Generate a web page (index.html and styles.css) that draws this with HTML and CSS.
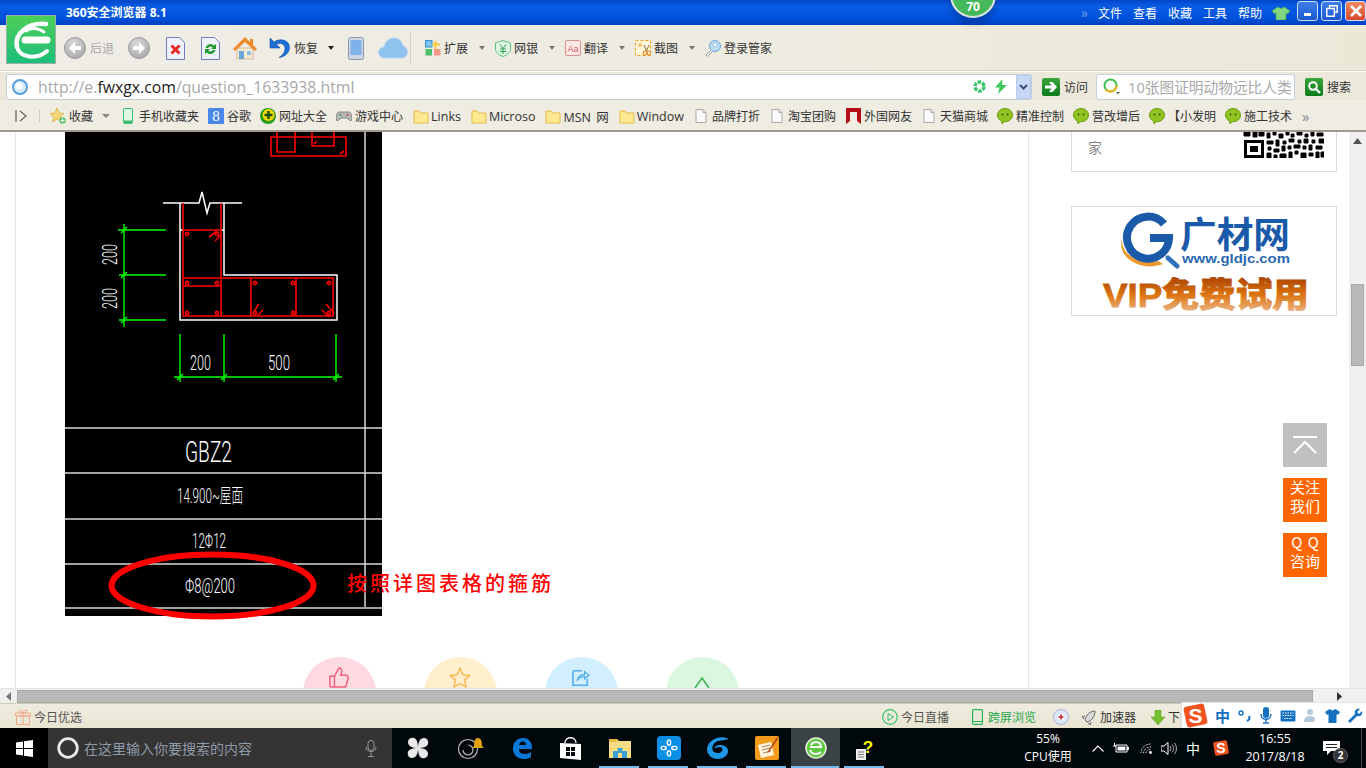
FILE: index.html
```html
<!DOCTYPE html>
<html lang="zh-CN">
<head>
    <meta charset="UTF-8">
    <meta name="viewport" content="width=device-width, initial-scale=1.0">
    <title>360安全浏览器 8.1</title>
    <link rel="stylesheet" href="styles.css">
</head>
<body>
    <svg class="defs" aria-hidden="true">
        <defs>
            <linearGradient id="logo-green" x1="0" y1="0" x2="0" y2="1">
                <stop offset="0" stop-color="#4ccf58"/>
                <stop offset="1" stop-color="#1cbf7c"/>
            </linearGradient>
            <linearGradient id="vip-fill" x1="0" y1="0" x2="0" y2="1">
                <stop offset="0" stop-color="#a84000"/>
                <stop offset="0.5" stop-color="#dc7410"/>
                <stop offset="1" stop-color="#eebc94"/>
            </linearGradient>
            <radialGradient id="grey-ball" cx="0.4" cy="0.3" r="0.8">
                <stop offset="0" stop-color="#d8d8d8"/>
                <stop offset="1" stop-color="#a6a6a6"/>
            </radialGradient>
            <linearGradient id="green-btn" x1="0" y1="0" x2="0" y2="1">
                <stop offset="0" stop-color="#3aa53a"/>
                <stop offset="1" stop-color="#0d7a1c"/>
            </linearGradient>
            <symbol id="i-folder" viewBox="0 0 16 16">
                <path d="M1 3h5l1.500 2H15v10H1z" fill="#fde98f" stroke="#e8b84a"/>
            </symbol>
            <symbol id="i-doc" viewBox="0 0 12 14">
                <path d="M1 .5h7l3 3v10H1z" fill="#fafafa" stroke="#a8a8a8"/>
                <path d="M8 .5v3h3" fill="none" stroke="#a8a8a8"/>
            </symbol>
            <symbol id="i-chat" viewBox="0 0 16 16">
                <path d="M8 .5c4.200 0 7.500 2.900 7.500 6.600S12.200 13.700 8 13.700h-.8L5 15.800l-.6-3C2 11.700.5 9.600.5 7.100.5 3.400 3.800.5 8 .5z" fill="#8fc31f" stroke="#6d9a12"/>
                <circle cx="5.500" cy="6.500" r="1" fill="#3c5a08"/>
                <circle cx="10.500" cy="6.500" r="1" fill="#3c5a08"/>
            </symbol>
        </defs>
    </svg>

    <div class="browser">
        <!-- title bar -->
        <div class="titlebar">
            <span class="app-title">360安全浏览器 8.1</span>
            <div class="score">70</div>
            <div class="title-menu">
                <span class="chevrons">»</span>
                <span>文件</span><span>查看</span><span>收藏</span><span>工具</span><span>帮助</span>
                <svg class="shirt" width="18" height="14" viewBox="0 0 18 14"><path d="M5.500 1 9 2.500 12.500 1 18 5l-2.500 3-1.500-1v7H4V7L2.500 8 0 5z" fill="#7fd67f" stroke="#3f9f4f" stroke-width=".6"/></svg>
            </div>
            <div class="win-buttons">
                <div class="win-btn"><svg width="10" height="10" viewBox="0 0 10 10"><rect x="1" y="7" width="7" height="3" fill="#fff"/></svg></div>
                <div class="win-btn"><svg width="12" height="12" viewBox="0 0 12 12"><path d="M3.500 3V.8h7.700v6.400H8.500M.8 3.500h7.500v7.700H.8z" fill="none" stroke="#fff" stroke-width="1.400"/></svg></div>
                <div class="win-btn win-close"><svg width="12" height="12" viewBox="0 0 12 12"><path d="M1 1l10 10M11 1 1 11" stroke="#fff" stroke-width="2.600"/></svg></div>
            </div>
        </div>

        <!-- logo sits across title bar and toolbar -->
        <div class="app-logo">
            <svg width="48" height="47" viewBox="0 0 48 47">
                <rect width="48" height="47" fill="url(#logo-green)"/>
                <path d="M18 24H40" fill="none" stroke="#fff" stroke-width="7" stroke-linecap="round"/>
                <path d="M10 31C7 17 22 6 39 8" fill="none" stroke="#fff" stroke-width="4.500" stroke-linecap="round"/>
                <path d="M10 31C13 42 30 44 40 35" fill="none" stroke="#fff" stroke-width="4" stroke-linecap="round"/>
                <path d="M19 15C24 11 32 12 37 16" fill="none" stroke="#fff" stroke-width="3" stroke-linecap="round"/>
            </svg>
        </div>

        <!-- toolbar -->
        <div class="toolbar">
            <div class="tool tool-back">
                <svg width="22" height="22" viewBox="0 0 22 22"><circle cx="11" cy="11" r="10.500" fill="url(#grey-ball)" stroke="#999"/><path d="M11 5 5 11l6 6v-4h6V9h-6z" fill="#fff"/></svg>
                <span class="muted">后退</span>
            </div>
            <div class="tool tool-forward">
                <svg width="22" height="22" viewBox="0 0 22 22"><circle cx="11" cy="11" r="10.500" fill="url(#grey-ball)" stroke="#999"/><path d="M11 5l6 6-6 6v-4H5V9h6z" fill="#fff"/></svg>
            </div>
            <div class="tool tool-stop">
                <svg width="19" height="23" viewBox="0 0 19 23"><path d="M.5.500h13l5 5v17H.5z" fill="#eef0fb" stroke="#6f7fc0"/><path d="M5.500 8.500l8 8M13.500 8.500l-8 8" stroke="#e8261c" stroke-width="2.800"/></svg>
            </div>
            <div class="tool tool-refresh">
                <svg width="19" height="23" viewBox="0 0 19 23"><path d="M.5.500h13l5 5v17H.5z" fill="#eef0fb" stroke="#6f7fc0"/><path d="M4.500 11a5 5 0 0 1 8.500-2.500L15 7v5h-5l1.700-1.700A3 3 0 0 0 7 11zM14.500 13a5 5 0 0 1-8.500 2.500L4 17v-5h5l-1.700 1.700A3 3 0 0 0 12 13z" fill="#1e9a28"/></svg>
            </div>
            <div class="tool tool-home">
                <svg width="24" height="24" viewBox="0 0 24 24"><path d="M4 12h16v11H4z" fill="#f5e9cf" stroke="#b8a27a" stroke-width=".6"/><path d="M12 1 0 13l2 2L12 6l10 9 2-2-4-4V3h-3v3z" fill="#ef8a2a"/><rect x="6" y="15" width="5" height="8" fill="#6aa6dc"/><rect x="14" y="15" width="4" height="4" fill="#8ec0ea"/></svg>
            </div>
            <div class="tool tool-undo">
                <svg width="22" height="22" viewBox="0 0 22 22"><path d="M2 1v10h10L8.500 7.500C12 5 17 7 17 11.500c0 4-3 7-6 9 6-.5 10.500-5 10.500-10C21.500 3 12 .5 6 5z" fill="#1f6fd6" stroke="#104f9c" stroke-width=".6"/></svg>
                <span>恢复</span>
                <i class="caret caret-dark"></i>
            </div>
            <div class="tool tool-phone">
                <svg width="16" height="23" viewBox="0 0 16 23"><rect x=".5" y=".5" width="15" height="22" rx="2" fill="#cfd6e2" stroke="#8a97ad"/><rect x="2.500" y="3" width="11" height="15" fill="#7fb2ea"/></svg>
            </div>
            <div class="tool tool-cloud">
                <svg width="30" height="22" viewBox="0 0 30 22"><path d="M7 21c-4 0-6.500-2.500-6.500-5.500S3 10 6 10c1-5 5-9 10-9s8 3.500 9 8c3 .5 4.500 3 4.500 6s-2.500 6-5.500 6z" fill="#8fc2ee" stroke="#b5d5f2"/></svg>
            </div>
            <div class="tool-sep"></div>
            <div class="tool tool-menu tool-ext">
                <svg width="16" height="16" viewBox="0 0 16 16"><rect x=".5" y=".5" width="6.500" height="6.500" fill="#7cc4f0" stroke="#3d8fd0"/><path d="M11.500 0v3.500H15v2h-3.500V9h-2V5.500H6" fill="#f6c83c"/><rect x=".5" y="9" width="6.500" height="6.500" fill="#4cc06a"/><rect x="9" y="9" width="6.500" height="6.500" fill="#f49a8a"/></svg>
                <span>扩展</span>
                <i class="caret"></i>
            </div>
            <div class="tool tool-menu">
                <svg width="16" height="17" viewBox="0 0 16 17"><path d="M8 .5 15.500 3v6c0 3.500-3 6-7.500 7.500C3.500 15 .5 12.500.5 9V3z" fill="#dff6e4" stroke="#5cbf7a"/><path d="M5 4.500l3 4 3-4M5 9h6M5 11.500h6M8 8.500V14" fill="none" stroke="#2fa558"/></svg>
                <span>网银</span>
                <i class="caret"></i>
            </div>
            <div class="tool tool-menu">
                <svg width="16" height="16" viewBox="0 0 16 16"><rect x=".5" y=".5" width="15" height="15" rx="1.500" fill="#fbe9e6" stroke="#dc8f8f"/><text class="icon-label" x="8" y="11.500">Aa</text></svg>
                <span>翻译</span>
                <i class="caret"></i>
            </div>
            <div class="tool tool-menu">
                <svg width="16" height="16" viewBox="0 0 16 16"><rect x=".5" y=".5" width="15" height="15" fill="#fff6dc" stroke="#f0a020" stroke-dasharray="3 2"/><circle cx="5" cy="5" r="2" fill="#f5c066"/><circle cx="10" cy="13" r="2" fill="none" stroke="#e07c10"/><circle cx="14" cy="13" r="2" fill="none" stroke="#e07c10"/><path d="M9 5l2.500 6 2.500-6" fill="none" stroke="#8a6a30"/></svg>
                <span>截图</span>
                <i class="caret"></i>
            </div>
            <div class="tool tool-login">
                <svg width="16" height="17" viewBox="0 0 16 17"><circle cx="10" cy="6" r="5.500" fill="#bcdcf6" stroke="#6fa8d8"/><circle cx="10" cy="5" r="2" fill="#fff" stroke="#6fa8d8" stroke-width=".6"/><path d="M6 10 1 15l1.500 1.500 5-5" fill="#f2f2f2" stroke="#9a9a9a"/></svg>
                <span>登录管家</span>
            </div>
        </div>

        <!-- address bar -->
        <div class="addressbar">
            <div class="url-box">
                <svg width="16" height="16" viewBox="0 0 16 16"><circle cx="8" cy="8" r="7" fill="#d6ecfb" stroke="#5a9fdc" stroke-width="2"/><circle cx="7" cy="7" r="3.500" fill="#fff"/></svg>
                <div class="url-text">http://e.<b>fwxgx.com</b>/question_1633938.html</div>
                <svg class="spin" width="13" height="13" viewBox="0 0 13 13"><circle cx="6.500" cy="6.500" r="4.500" fill="none" stroke="#37c46a" stroke-width="3.400" stroke-dasharray="3.500 1.200"/></svg>
                <svg class="bolt" width="12" height="15" viewBox="0 0 12 15"><path d="M7.500 0 0 8.500h4.500L3 15l9-9H7z" fill="#3cc85a"/></svg>
                <div class="url-drop"><svg width="9" height="6" viewBox="0 0 9 6"><path d="M1 1l3.500 3.500L8 1" fill="none" stroke="#36507e" stroke-width="2"/></svg></div>
            </div>
            <div class="go-btn">
                <svg width="18" height="18" viewBox="0 0 18 18"><rect width="18" height="18" rx="2" fill="url(#green-btn)"/><path d="M3 7.500h6.500L7 4h3.500L15 9l-4.500 5H7l2.500-3.500H3z" fill="#fff"/></svg>
                <span>访问</span>
            </div>
            <div class="search-box">
                <svg width="17" height="17" viewBox="0 0 17 17"><circle cx="7.500" cy="7.500" r="6" fill="none" stroke="#3ec04e" stroke-width="2"/><path d="M13.500 7.500A6 6 0 0 1 3 11.500" fill="none" stroke="#f4b21c" stroke-width="2"/><path d="M13 14h4l-2 2.500z" fill="#666"/></svg>
                <div class="search-text">10张图证明动物远比人类</div>
            </div>
            <div class="go-btn search-btn">
                <svg width="18" height="18" viewBox="0 0 18 18"><rect width="18" height="18" rx="2" fill="url(#green-btn)"/><circle cx="8" cy="8" r="3.800" fill="none" stroke="#fff" stroke-width="2"/><path d="M11 11l4 4" stroke="#fff" stroke-width="2.400"/></svg>
                <span>搜索</span>
            </div>
        </div>

        <!-- favourites bar -->
        <div class="favbar">
            <svg class="fav-toggle" width="12" height="12" viewBox="0 0 12 12"><path d="M1 0v12M5 1l6 5-6 5" fill="none" stroke="#666" stroke-width="1.300"/></svg>
            <div class="fav-sep"></div>
            <div class="fav fav-main">
                <svg width="16" height="16" viewBox="0 0 16 16"><path d="M7 0l2 5 5 .5-3.800 3.300 1.200 5L7 11l-4.400 2.800 1.200-5L0 5.500 5 5z" fill="#f8d878" stroke="#d8a830" stroke-width=".7"/><circle cx="12.500" cy="12.500" r="3.200" fill="#5ac26a"/><path d="M12.500 10.500v4M10.500 12.500h4" stroke="#fff"/></svg>
                <span>收藏</span>
                <i class="caret caret-wide"></i>
            </div>
            <div class="fav fav-phone">
                <svg width="10" height="16" viewBox="0 0 10 16"><rect x=".5" y=".5" width="9" height="15" rx="1.500" fill="#dff5e6" stroke="#3fbe72"/><rect x="1" y="12.500" width="8" height="3" fill="#3fbe72"/></svg>
                <span>手机收藏夹</span>
            </div>
            <div class="fav">
                <svg width="16" height="16" viewBox="0 0 16 16"><rect width="16" height="16" rx="1" fill="#4a88e8"/><text class="icon-g" x="8" y="13">8</text></svg>
                <span>谷歌</span>
            </div>
            <div class="fav">
                <svg width="16" height="16" viewBox="0 0 16 16"><circle cx="8" cy="8" r="8" fill="#2a9a20"/><circle cx="8.500" cy="7" r="6" fill="#f5d800"/><path d="M8.500 3v8M4.500 7h8" stroke="#14500f" stroke-width="2.400"/></svg>
                <span>网址大全</span>
            </div>
            <div class="fav">
                <svg width="16" height="16" viewBox="0 0 16 16"><path d="M3 4h10c2 0 3 4 3 7 0 2-2 2-3 1l-2-2H5l-2 2c-1 1-3 1-3-1 0-3 1-7 3-7z" fill="#b8b8b8" stroke="#666" stroke-width=".7"/><circle cx="4.500" cy="7" r="1" fill="#3a9a3a"/><circle cx="11.500" cy="7" r="1" fill="#c83a3a"/></svg>
                <span>游戏中心</span>
            </div>
            <div class="fav fav-folder"><svg width="16" height="16"><use href="#i-folder"/></svg><span>Links</span></div>
            <div class="fav fav-folder"><svg width="16" height="16"><use href="#i-folder"/></svg><span>Microso</span></div>
            <div class="fav fav-folder"><svg width="16" height="16"><use href="#i-folder"/></svg><span>MSN 网</span></div>
            <div class="fav fav-folder"><svg width="16" height="16"><use href="#i-folder"/></svg><span>Window</span></div>
            <div class="fav fav-doc"><svg width="12" height="14"><use href="#i-doc"/></svg><span>品牌打折</span></div>
            <div class="fav fav-doc"><svg width="12" height="14"><use href="#i-doc"/></svg><span>淘宝团购</span></div>
            <div class="fav fav-red">
                <svg width="15" height="16" viewBox="0 0 15 16"><path d="M0 0h15v16l-4-3V4H4v9l-4 3z" fill="#b80d12"/></svg>
                <span>外国网友</span>
            </div>
            <div class="fav fav-doc"><svg width="12" height="14"><use href="#i-doc"/></svg><span>天猫商城</span></div>
            <div class="fav"><svg width="16" height="16"><use href="#i-chat"/></svg><span>精准控制</span></div>
            <div class="fav"><svg width="16" height="16"><use href="#i-chat"/></svg><span>营改增后</span></div>
            <div class="fav"><svg width="16" height="16"><use href="#i-chat"/></svg><span>【小发明</span></div>
            <div class="fav"><svg width="16" height="16"><use href="#i-chat"/></svg><span>施工技术</span></div>
            <span class="fav-more">»</span>
        </div>

        <!-- page area -->
        <div class="viewport">
            <div class="page">
                <main class="article">
                    <figure class="drawing">
                        <svg class="cad" width="317" height="484" viewBox="65 132 317 484">
                            <rect x="65" y="132" width="317" height="484" fill="#000"/>
                            <!-- detail above, cut by the scroll -->
                            <g class="cad-red">
                                <path d="M271 137h75v19h-75zM277 132v20h18v-20M312 132v14h22v-14M314 144l3-3M340 154l4-3"/>
                            </g>
                            <!-- wall outline -->
                            <path class="cad-white" d="M163 203h36l3-11 5 21 3-10h32"/>
                            <path class="cad-white" d="M180 203v117h157v-45h-113v-72"/>
                            <path class="cad-white" d="M180 230h3M221 230h3"/>
                            <!-- rebar -->
                            <g class="cad-red">
                                <path d="M183 203v113h150v-38H183M221 203v113M183 230h38M183 286h38M251 278v38M296 278v38"/>
                                <path d="M209 237l8-6M215 241l6-6M253 313l6-9M258 315l5-5M322 310l7 7M326 304l7 8"/>
                                <circle cx="187" cy="234" r="1.600"/><circle cx="217" cy="234" r="1.600"/>
                                <circle cx="187" cy="283" r="1.600"/><circle cx="217" cy="283" r="1.600"/>
                                <circle cx="187" cy="313" r="1.600"/><circle cx="217" cy="313" r="1.600"/>
                                <circle cx="255" cy="283" r="1.600"/><circle cx="293" cy="283" r="1.600"/>
                                <circle cx="255" cy="313" r="1.600"/><circle cx="293" cy="313" r="1.600"/>
                                <circle cx="329" cy="283" r="1.600"/><circle cx="329" cy="313" r="1.600"/>
                            </g>
                            <!-- dimensions -->
                            <g class="cad-green">
                                <path d="M124 224v103M118 230h48M119 275h47M119 320h47"/>
                                <path d="M180 334v48M224 334v48M336 334v48M174 377h168"/>
                                <path d="M121 233l6-6M121 278l6-6M121 323l6-6M177 380l6-6M221 380l6-6M333 380l6-6"/>
                            </g>
                            <text class="cad-text" transform="translate(117 265) rotate(-90)" textLength="21" lengthAdjust="spacingAndGlyphs">200</text>
                            <text class="cad-text" transform="translate(117 309) rotate(-90)" textLength="21" lengthAdjust="spacingAndGlyphs">200</text>
                            <text class="cad-text" x="190" y="370" textLength="21" lengthAdjust="spacingAndGlyphs">200</text>
                            <text class="cad-text" x="268" y="370" textLength="22" lengthAdjust="spacingAndGlyphs">500</text>
                            <!-- table -->
                            <path class="cad-rule" d="M365 132v475M65 428h317M65 473h317M65 519h317M65 564h317M65 608h317"/>
                            <text class="cad-title" x="185" y="462" textLength="47" lengthAdjust="spacingAndGlyphs">GBZ2</text>
                            <text class="cad-cell" x="177" y="503" textLength="66" lengthAdjust="spacingAndGlyphs">14.900~屋面</text>
                            <text class="cad-cell" x="192" y="548" textLength="34" lengthAdjust="spacingAndGlyphs">12Φ12</text>
                            <text class="cad-cell" x="185" y="593" textLength="50" lengthAdjust="spacingAndGlyphs">Φ8@200</text>
                            <ellipse class="cad-ring" cx="212.500" cy="585.500" rx="101" ry="31"/>
                        </svg>
                        <figcaption class="note">按照详图表格的箍筋</figcaption>
                    </figure>
                    <div class="reactions">
                        <div class="reaction r-like">
                            <svg width="20" height="22" viewBox="0 0 22 24"><path d="M1 10h5v12H3a2 2 0 0 1-2-2zM6 10l5-9c2 0 3 2 3 4l-1 4h6c2 0 2 2 2 3l-2 8c0 1-1 2-3 2H6" fill="none" stroke="#f0607c" stroke-width="1.600"/></svg>
                        </div>
                        <div class="reaction r-star">
                            <svg width="22" height="22" viewBox="0 0 24 24"><path d="M12 1.500l3.200 7 7.300.8-5.500 5 1.500 7.500-6.500-3.800-6.500 3.800L7 14.300l-5.500-5 7.300-.8z" fill="none" stroke="#f6b84c" stroke-width="1.500"/></svg>
                        </div>
                        <div class="reaction r-share">
                            <svg width="18" height="18" viewBox="0 0 20 20"><path d="M11 2H3a2 2 0 0 0-2 2v14h16v-7" fill="none" stroke="#56b0ea" stroke-width="1.800"/><path d="M6 12c1-4 4-6 8-6V3l5 4-5 4V8c-3 0-5 1-8 4z" fill="none" stroke="#56b0ea" stroke-width="1.500"/></svg>
                        </div>
                        <div class="reaction r-up">
                            <svg width="16" height="12" viewBox="0 0 16 12"><path d="M1 11 8 1l7 10" fill="none" stroke="#3fb45a" stroke-width="1.600"/></svg>
                        </div>
                    </div>
                </main>
                <aside class="sidebar">
                    <div class="card card-qr">
                        <span class="qr-text">家</span>
                        <svg class="qr" width="81" height="26" viewBox="0 0 81 26">
                            <path d="M1 8h20v18H1zM4 11v12h14V11zM7 14h8v6H7z" fill="#000" fill-rule="evenodd"/>
                            <path class="qr-noise" d="M1 0h6v4H1zM10 0h4v5h-4zM16 0h5v4h-5zM24 1h3v5h-3zM30 0h3v3h-3zM36 2h4v4h-4zM43 0h3v3h-3zM48 2h3v3h-3zM54 0h5v3h-5zM62 2h3v3h-3zM68 0h3v4h-3zM74 1h6v3h-6zM24 9h6v3h-6zM33 8h3v6h-3zM40 9h3v3h-3zM46 7h5v3h-5zM55 8h3v3h-3zM61 7h4v4h-4zM69 8h3v3h-3zM76 7h5v4h-5zM25 15h3v3h-3zM31 17h5v3h-5zM39 14h3v5h-3zM45 14h3v3h-3zM51 13h6v3h-6zM60 14h3v3h-3zM66 13h3v5h-3zM73 14h6v3h-6zM24 21h4v5h-4zM31 23h3v3h-3zM37 22h6v4h-6zM46 20h3v6h-3zM52 19h3v3h-3zM58 21h5v5h-5zM66 21h4v3h-4zM73 20h3v6h-3zM78 20h3v5h-3z"/>
                        </svg>
                    </div>
                    <div class="card card-ad">
                        <svg width="264" height="108" viewBox="0 0 264 108">
                            <path d="M50 30C48 48 68 58 86 54l5 3C70 65 44 52 50 30z" fill="#ea9a2e"/>
                            <path d="M92 17A21 21 0 1 0 97 31H78" fill="none" stroke="#1a5aa8" stroke-width="8"/>
                            <path d="M96 51l9 8" stroke="#2f6fb8" stroke-width="5" stroke-linecap="round"/>
                            <text class="ad-name" x="108" y="41" textLength="110" lengthAdjust="spacingAndGlyphs">广材网</text>
                            <text class="ad-url" x="110" y="56" textLength="108" lengthAdjust="spacingAndGlyphs">www.gldjc.com</text>
                            <text class="ad-vip" x="31" y="100" textLength="206" lengthAdjust="spacingAndGlyphs">VIP免费试用</text>
                        </svg>
                    </div>
                </aside>
            </div>
            <div class="vscroll">
                <svg class="arrow-up" width="9" height="6" viewBox="0 0 9 6"><path d="M4.500 0 9 6H0z" fill="#555"/></svg>
                <div class="vthumb"></div>
            </div>
            <!-- floating side buttons -->
            <div class="float-btns">
                <div class="float-btn float-top">
                    <svg width="24" height="18" viewBox="0 0 24 18"><path d="M0 1h24" stroke="#fff" stroke-width="2"/><path d="M1 17 12 6l11 11" fill="none" stroke="#fff" stroke-width="2"/></svg>
                </div>
                <div class="float-btn"><span class="float-label">关注<br>我们</span></div>
                <div class="float-btn"><span class="float-label">Q Q<br>咨询</span></div>
            </div>
        </div>

        <!-- horizontal scrollbar -->
        <div class="hscroll">
            <svg class="arrow-left" width="5" height="9" viewBox="0 0 5 9"><path d="M5 0v9L0 4.500z" fill="#777"/></svg>
            <div class="hthumb"></div>
            <svg class="arrow-right" width="5" height="9" viewBox="0 0 5 9"><path d="M0 0v9l5-4.500z" fill="#333"/></svg>
        </div>

        <!-- status bar -->
        <div class="statusbar">
            <div class="status-item status-left">
                <svg width="16" height="16" viewBox="0 0 16 16"><path d="M1.500 7h13v8.500h-13zM.5 4h15v3H.5zM8 4v11.500M8 4C5 4 4 3 4 1.500 6 .5 8 2 8 4c0-2 2-3.500 4-2.500C12 3 11 4 8 4z" fill="none" stroke="#f4a98c"/></svg>
                <span>今日优选</span>
            </div>
            <div class="status-right">
                <div class="status-item">
                    <svg width="16" height="16" viewBox="0 0 16 16"><circle cx="8" cy="8" r="7.300" fill="none" stroke="#38bf6a" stroke-width="1.200"/><path d="M6 4.500 11.500 8 6 11.500z" fill="none" stroke="#38bf6a"/></svg>
                    <span>今日直播</span>
                </div>
                <div class="status-item status-cross">
                    <svg width="11" height="16" viewBox="0 0 11 16"><rect x=".6" y=".6" width="9.800" height="14.800" rx="1" fill="none" stroke="#28b85a" stroke-width="1.200"/><path d="M1 12.500h9" stroke="#28b85a"/></svg>
                    <span>跨屏浏览</span>
                </div>
                <svg class="status-med" width="16" height="16" viewBox="0 0 16 16"><circle cx="8" cy="8" r="7.500" fill="#dce6f6" stroke="#a8b8d8"/><circle cx="8" cy="8" r="3.500" fill="#fff"/><path d="M8 5.500v5M5.500 8h5" stroke="#c8282c" stroke-width="1.600"/></svg>
                <div class="status-item status-speed">
                    <svg width="14" height="15" viewBox="0 0 14 15"><path d="M13 1C8 1 4 5 3 10l2 2c5-1 8-6 8-11zM3 6 0 7l2 2M9 12l-1 3-2-2" fill="#d8d8d8" stroke="#666"/></svg>
                    <span>加速器</span>
                </div>
                <div class="status-item status-down">
                    <svg width="14" height="15" viewBox="0 0 14 15"><path d="M4 0h6v7h4l-7 8-7-8h4z" fill="#76c030" stroke="#5aa020" stroke-width=".5"/></svg>
                    <span>下载</span>
                </div>
            </div>
            <!-- input method bar -->
            <div class="ime">
                <svg class="ime-logo" width="25" height="25" viewBox="0 0 25 25"><rect x="2" y="2" width="21" height="21" rx="3" fill="#ef5322" transform="rotate(-12 12.500 12.500)"/><text class="ime-s" x="12.500" y="20">S</text></svg>
                <span class="ime-zh">中</span>
                <svg width="14" height="12" viewBox="0 0 14 12"><circle cx="3" cy="3" r="2" fill="none" stroke="#1470c0" stroke-width="1.400"/><path d="M11 6c1 2 0 4-2 5" fill="none" stroke="#1470c0" stroke-width="2"/></svg>
                <svg width="12" height="17" viewBox="0 0 12 17"><rect x="3" y="0" width="6" height="11" rx="3" fill="#1470c0"/><path d="M1 7c0 7 10 7 10 0M6 12v3M3 16h6" fill="none" stroke="#1470c0" stroke-width="1.400"/></svg>
                <svg width="16" height="12" viewBox="0 0 16 12"><rect x=".6" y=".6" width="14.800" height="10.800" rx="1" fill="#1470c0"/><path d="M2.500 3h11M2.500 5.500h11M4 8.500h8" stroke="#fff" stroke-dasharray="1.500 1"/></svg>
                <svg width="15" height="15" viewBox="0 0 15 15"><circle cx="6" cy="4" r="3" fill="#b4c8da"/><path d="M0 14c0-5 3-6 6-6s4 1 5 2l-1 4z" fill="#b4c8da"/></svg>
                <svg class="ime-shirt" width="15" height="14" viewBox="0 0 15 14"><path d="M4.500 0 7.500 1.500 10.500 0 15 3l-2 3-1.500-1v9h-8V5L2 6 0 3z" fill="#1470c0"/></svg>
                <svg width="15" height="15" viewBox="0 0 15 15"><path d="M14 3l-3 3-2-2 3-3c-3-1-6 1-5 5L0 13l2 2 7-7c4 1 6-2 5-5z" fill="#1470c0"/></svg>
            </div>
        </div>

        <!-- windows taskbar -->
        <div class="taskbar">
            <div class="start">
                <svg width="17" height="17" viewBox="0 0 17 17"><path d="M0 2.500 7 1.500v6.500H0zM8 1.300 17 0v8H8zM0 9h7v6.500l-7-1zM8 9h9v8l-9-1.300z" fill="#fff"/></svg>
            </div>
            <div class="cortana">
                <svg width="22" height="22" viewBox="0 0 22 22"><circle cx="11" cy="11" r="9.300" fill="none" stroke="#e8e8e8" stroke-width="2.800"/></svg>
                <span class="cortana-text">在这里输入你要搜索的内容</span>
                <svg class="mic" width="12" height="17" viewBox="0 0 12 17"><rect x="3" y=".5" width="6" height="10" rx="3" fill="none" stroke="#999"/><path d="M1 7c0 6 10 6 10 0M6 12.500V16M3 16.500h6" fill="none" stroke="#999"/></svg>
            </div>
            <div class="tile tile-first">
                <svg width="22" height="22" viewBox="0 0 22 22"><path d="M11 11C5 11 1 9 1 5c0-3 3-5 6-4 3 1 4 5 4 10zM11 11c0-6 2-10 6-10 3 0 5 3 4 6-1 3-5 4-10 4zM11 11c6 0 10 2 10 6 0 3-3 5-6 4-3-1-4-5-4-10zM11 11c0 6-2 10-6 10-3 0-5-3-4-6 1-3 5-4 10-4z" fill="#e8e8e8"/></svg>
            </div>
            <div class="tile tile-second">
                <svg width="28" height="24" viewBox="0 0 28 24"><circle cx="11" cy="13" r="9.500" fill="none" stroke="#bbb" stroke-width="1.200"/><path d="M6 14a5 5 0 1 0 5-5" fill="none" stroke="#bbb" stroke-width="1.200"/><path d="M17 10c0-5 1-8 4-8s4 3 4 8l2 2H15z" fill="#e0a010"/></svg>
            </div>
            <div class="tile">
                <svg width="20" height="21" viewBox="0 0 20 21"><path d="M1 11C1 4 5 0 11 0c6 0 9 4 9 11H7c0 3 2 5 6 5 2 0 4-.5 6-2v5c-2 1.500-4 2-7 2-6 0-11-4-11-10zM7 7h7c0-2-1-3.500-3.500-3.500C9 3.500 7.500 5 7 7z" fill="#0a78d7"/></svg>
            </div>
            <div class="tile">
                <svg width="21" height="23" viewBox="0 0 21 23"><path d="M5 6c0-7 11-7 11 0" fill="none" stroke="#fff" stroke-width="1.300"/><path d="M0 6l21 1v16L0 21z" fill="#fff"/><path d="M6 10h4v4H6zM11 10h4v4h-4zM6 15h4v4H6zM11 15h4v4h-4z" fill="#00080c"/></svg>
            </div>
            <div class="tile tile-open">
                <svg width="22" height="20" viewBox="0 0 22 20"><path d="M0 1h8l2 2h12v17H0z" fill="#f8dd85"/><rect y="1" width="8" height="3" fill="#e8b93c"/><path d="M4 20v-7h5l-1-3h6l-1 3h5v7z" fill="#3a9fd8"/><rect x="9" y="15" width="4" height="5" fill="#f8dd85"/></svg>
            </div>
            <div class="tile tile-open">
                <svg width="24" height="24" viewBox="0 0 24 24"><rect width="24" height="24" rx="4" fill="#0a8fe8"/><path d="M12 4c2 0 2 3 1 5h-2c-1-2-1-5 1-5zM4 12c0-2 3-2 5-1v2c-2 1-5 1-5-1zM20 12c0 2-3 2-5 1v-2c2-1 5-1 5 1zM12 20c-2 0-2-3-1-5h2c1 2 1 5-1 5z" fill="none" stroke="#fff" stroke-width="1.400"/></svg>
            </div>
            <div class="tile tile-open">
                <svg width="24" height="24" viewBox="0 0 24 24"><path d="M23 3C13-2 2 4 1 13c0 6 5 10 11 10s10-4 10-8-4-6-8-6c-3 0-5 1-6 3l6-1c2 0 3 2 2 4s-5 3-8 1C5 13 6 7 12 5c4-1 8-1 11-2z" fill="#1e96e6"/></svg>
            </div>
            <div class="tile tile-open">
                <svg width="24" height="24" viewBox="0 0 24 24"><rect width="24" height="24" rx="2" fill="#f29b1c"/><path d="M3 9l13-3 3 13-13 3z" fill="#fff5dc"/><path d="M7 11l8-2M7 14l8-2M8 17l8-2" stroke="#a08060"/><path d="M22 1 13 15l-1 2 2-1L23 3z" fill="#b8461c"/></svg>
            </div>
            <div class="tile tile-open tile-active">
                <svg width="22" height="22" viewBox="0 0 22 22"><circle cx="11" cy="11" r="10" fill="#5cc83c" stroke="#e8f4e0" stroke-width="1.500"/><path d="M5 10h12M5 13c1 3 3 4 6 4 2 0 4-1 5-2M6 8c1-2 3-3 5-3 3 0 5 2 5 5" fill="none" stroke="#fff" stroke-width="2"/></svg>
            </div>
            <div class="tile tile-open">
                <svg width="17" height="24" viewBox="0 -5 17 24"><path d="M0 8h10v11H0z" fill="#eee"/><path d="M2 11h6M2 13.500h6M2 16h6" stroke="#777"/><text class="tile-q" x="12" y="12">?</text></svg>
            </div>
            <div class="tray">
                <div class="cpu"><span>55%</span><span>CPU使用</span></div>
                <svg class="tray-up" width="12" height="7" viewBox="0 0 12 7"><path d="M.5 6.500 6 1l5.500 5.500" fill="none" stroke="#fff" stroke-width="1.100"/></svg>
                <svg class="tray-bat" width="16" height="10" viewBox="0 0 16 10"><path d="M0 3h3M1.500 0v3M3 2h11v7H3z" fill="none" stroke="#fff"/><rect x="4.500" y="3.500" width="8" height="4" fill="#fff"/><rect x="14" y="4" width="2" height="3" fill="#fff"/></svg>
                <svg class="tray-wifi" width="12" height="11" viewBox="0 0 12 11"><path d="M1 10C1 5 5 1 11 1M3.500 10c0-3 3-6 7.500-6M6 10c0-2 2-3.500 5-3.500" fill="none" stroke="#ddd" stroke-dasharray="1 .6"/><circle cx="10.500" cy="9.500" r="1.400" fill="#fff"/></svg>
                <svg class="tray-vol" width="16" height="13" viewBox="0 0 16 13"><path d="M0 4h3l4-3.500v12L3 9H0z" fill="none" stroke="#fff"/><path d="M9 4c1 1.500 1 3.500 0 5M11 2.500c2 2.500 2 5.500 0 8M13.500 1c2.500 3 2.500 8 0 11" fill="none" stroke="#bbb"/></svg>
                <span class="tray-zh">中</span>
                <svg class="tray-s" width="16" height="16" viewBox="0 0 16 16"><rect x="1" y="1" width="14" height="14" rx="2" fill="#ef5322" transform="rotate(-10 8 8)"/><text class="tray-s-text" x="8" y="13">S</text></svg>
                <div class="clock"><span>16:55</span><span>2017/8/18</span></div>
                <div class="notify">
                    <svg width="17" height="14" viewBox="0 0 17 14"><path d="M0 0h17v10H8l-4 4v-4H0z" fill="#fff"/><path d="M3 3.500h11M3 6.500h11" stroke="#222"/></svg>
                    <span class="notify-count">2</span>
                </div>
            </div>
        </div>
    </div>
</body>
</html>
```

FILE: styles.css
```css
* {
    margin: 0;
    padding: 0;
    box-sizing: border-box;
}

html, body {
    width: 1366px;
    height: 768px;
    overflow: hidden;
}

body {
    font-family: "Open Sans", "Noto Sans CJK SC", sans-serif;
    font-size: 12px;
    color: #333;
}

.defs {
    position: absolute;
    width: 0;
    height: 0;
}

svg {
    display: block;
    flex-shrink: 0;
}

.browser {
    position: relative;
    display: flex;
    flex-direction: column;
    height: 768px;
}

/* title bar */
.titlebar {
    position: relative;
    display: flex;
    align-items: center;
    height: 25px;
    padding-left: 66px;
    color: #fff;
    background: linear-gradient(#0046c8, #0a5ce4 25%, #0052dc 70%, #0042c0);
}

.app-title {
    font-weight: 700;
    margin-top: -1px;
}

.score {
    position: absolute;
    left: 950px;
    top: -28px;
    width: 46px;
    height: 46px;
    padding-top: 26px;
    border: 2px solid #d9e3dc;
    border-radius: 50%;
    background: #45b859;
    text-align: center;
    font-size: 12px;
    line-height: 14px;
    font-weight: 700;
    box-shadow: 0 6px 6px rgba(0, 0, 0, 0.2);
}

.title-menu {
    position: absolute;
    left: 1081px;
    top: 0;
    height: 25px;
    display: flex;
    align-items: center;
    gap: 11px;
}

.chevrons {
    width: 6px;
    margin-right: 0;
    color: #6f9be6;
    font-size: 14px;
}

.shirt {
    margin-left: -1px;
}

.win-buttons {
    position: absolute;
    right: 0;
    top: 1px;
    display: flex;
    gap: 3px;
}

.win-btn {
    width: 21px;
    height: 20px;
    display: flex;
    align-items: center;
    justify-content: center;
    border: 1px solid #cfe0fa;
    border-radius: 3px;
    background: linear-gradient(#3f7ee8, #1a58d2);
}

.win-close {
    background: linear-gradient(#ef8a60, #d8482a);
}

.app-logo {
    position: absolute;
    left: 6px;
    top: 15px;
    border: 1px solid #9fb0a8;
    z-index: 2;
}

/* toolbar */
.toolbar {
    display: flex;
    align-items: center;
    height: 46px;
    padding-left: 64px;
    padding-top: 1px;
    background: linear-gradient(90deg, #efede6, #eeebe0 60%, #ece8d8);
    border-bottom: 1px solid #d9d3bf;
}

.tool {
    display: flex;
    align-items: center;
    gap: 4px;
    white-space: nowrap;
}

.muted {
    color: #aaa;
}

.tool-forward { margin-left: 14px; }
.tool-stop { margin-left: 16px; }
.tool-refresh { margin-left: 16px; }
.tool-home { margin-left: 13px; }
.tool-undo { margin-left: 11px; }
.tool-phone { margin-left: 14px; }
.tool-cloud { margin-left: 14px; }

.tool-sep {
    width: 1px;
    height: 32px;
    margin-left: 2px;
    background: #d5d1bf;
}

.tool-menu {
    width: 70px;
    gap: 3px;
}

.tool-ext {
    margin-left: 14px;
}

.tool-login {
    gap: 3px;
}

.caret {
    width: 0;
    height: 0;
    margin-left: 8px;
    border-left: 3.500px solid transparent;
    border-right: 3.500px solid transparent;
    border-top: 4px solid #777;
}

.caret-dark {
    margin-left: 6px;
    border-top-color: #222;
}

.caret-wide {
    margin-left: 6px;
    border-left-width: 4px;
    border-right-width: 4px;
    border-top-color: #888;
}

.icon-label {
    font-family: "Liberation Sans", sans-serif;
    font-size: 9px;
    text-anchor: middle;
    fill: #d86060;
}

.icon-g {
    font-family: "Liberation Serif", serif;
    font-size: 15px;
    text-anchor: middle;
    fill: #fff;
}

/* address bar */
.addressbar {
    display: flex;
    align-items: center;
    height: 31px;
    padding-left: 6px;
    background: #ece9dc;
    border-top: 1px solid #fff;
    border-bottom: 1px solid #f4f2e8;
}

.url-box {
    display: flex;
    align-items: center;
    width: 1026px;
    height: 26px;
    padding-left: 5px;
    background: #fff;
    border: 1px solid #c3cfd8;
    border-radius: 3px;
}

.url-text {
    flex: 1;
    margin-left: 10px;
    font-size: 15.800px;
    color: #a8a8a8;
    white-space: nowrap;
}

.url-text b {
    font-weight: 400;
    color: #222;
}

.bolt {
    margin-left: 9px;
}

.url-drop {
    width: 15px;
    height: 24px;
    margin-left: 9px;
    display: flex;
    align-items: center;
    justify-content: center;
    background: #c8d8f4;
    border: 1px solid #b6caee;
}

.go-btn {
    display: flex;
    align-items: center;
    gap: 4px;
    margin-left: 10px;
}

.search-box {
    display: flex;
    align-items: center;
    width: 199px;
    height: 26px;
    margin-left: 8px;
    padding-left: 6px;
    background: #fff;
    border: 1px solid #c3d0e0;
    border-radius: 3px;
    overflow: hidden;
}

.search-text {
    margin-left: 8px;
    font-size: 14.700px;
    color: #a8a8a8;
    white-space: nowrap;
}

.search-btn {
    margin-left: 10px;
}

/* favourites */
.favbar {
    display: flex;
    align-items: center;
    height: 28px;
    padding-left: 15px;
    background: #efece2;
}

.fav-toggle {
    margin-right: 12px;
}

.fav-sep {
    width: 1px;
    height: 12px;
    background: #ccc;
    margin-right: 10px;
}

.fav {
    display: flex;
    align-items: center;
    gap: 3px;
    margin-right: 9px;
    white-space: nowrap;
}

.fav-main {
    margin-right: 13px;
}

.fav-phone {
    gap: 6px;
}

.fav-doc {
    gap: 5px;
    margin-left: 2px;
}

.fav-red {
    margin-left: 1px;
}

.fav-folder {
    gap: 2px;
    margin-right: 9px;
    margin-left: 1px;
    font-size: 12.500px;
    word-spacing: 2px;
}

.fav-more {
    color: #888;
    font-size: 15px;
    margin-left: 1px;
}

/* page area */
.viewport {
    position: relative;
    flex: 1;
    min-height: 0;
    display: flex;
    background: #fff;
    border-top: 2px solid #9e9a8c;
    overflow: hidden;
}

.page {
    flex: 1;
    min-width: 0;
    display: flex;
    align-items: flex-start;
    padding-left: 15px;
}

.article {
    width: 1014px;
    height: 600px;
    padding-left: 49px;
    border-left: 1px solid #e6e6e6;
    border-right: 1px solid #e6e6e6;
}

.drawing {
    position: relative;
    width: 317px;
    height: 484px;
}

.cad {
    overflow: visible;
}

.cad-red, .cad-red circle {
    fill: none;
    stroke: #f00;
    stroke-width: 1.600;
}

.cad-white {
    fill: none;
    stroke: #fff;
    stroke-width: 1.500;
}

.cad-green {
    fill: none;
    stroke: #0f0;
    stroke-width: 1.400;
}

.cad-rule {
    fill: none;
    stroke: #d8d8d8;
    stroke-width: 1.500;
}

.cad-text, .cad-cell, .cad-title {
    font-family: Roboto, "Noto Sans CJK SC", sans-serif;
    fill: #fff;
    font-weight: 300;
}

.cad-text {
    font-size: 20px;
}

.cad-cell {
    font-size: 20px;
}

.cad-title {
    font-size: 29px;
}

.cad-ring {
    fill: none;
    stroke: #f00;
    stroke-width: 6;
}

.note {
    position: absolute;
    left: 282px;
    top: 437px;
    font-family: "Noto Sans CJK SC", sans-serif;
    font-size: 20px;
    font-weight: 500;
    line-height: 28px;
    letter-spacing: 3px;
    color: #f00;
    white-space: nowrap;
}

.reactions {
    display: flex;
    gap: 48.500px;
    margin-top: 41px;
    margin-left: 238px;
}

.reaction {
    width: 72.500px;
    height: 72.500px;
    border-radius: 50%;
    display: flex;
    justify-content: center;
    padding-top: 10px;
}

.r-like { background: #ffd9e0; }
.r-star { background: #ffefcc; }
.r-share { background: #d2efff; padding-top: 12px; }
.r-up { background: #dcf7e0; padding-top: 20px; }

.sidebar {
    width: 266px;
    margin-left: 42px;
}

.card {
    background: #fff;
    border: 1px solid #ddd;
}

.card-qr {
    display: flex;
    height: 40px;
    border-top: none;
    padding-left: 16px;
}

.qr-text {
    margin-top: 5px;
    font-family: "Noto Sans CJK SC", sans-serif;
    font-size: 14px;
    line-height: 20px;
    color: #888;
}

.qr {
    margin-left: 141px;
}

.qr-noise {
    fill: #000;
    stroke: #000;
    stroke-width: 1;
}

.card-ad {
    height: 110px;
    margin-top: 34px;
}

.ad-name {
    font-family: "Noto Sans CJK SC", sans-serif;
    font-size: 36px;
    font-weight: 700;
    fill: #1a5aa8;
}

.ad-url {
    font-family: "Liberation Sans", sans-serif;
    font-size: 13px;
    font-weight: 700;
    fill: #2a68b0;
}

.ad-vip {
    font-family: "Liberation Sans", "Noto Sans CJK SC", sans-serif;
    font-size: 34px;
    font-weight: 900;
    fill: url(#vip-fill);
    stroke: url(#vip-fill);
    stroke-width: 0.8;
}

.vscroll {
    position: relative;
    width: 17px;
    background: #f0f0f0;
}

.arrow-up {
    position: absolute;
    left: 4px;
    top: 6px;
}

.vthumb {
    position: absolute;
    left: 2px;
    top: 152px;
    width: 13px;
    height: 82px;
    background: #b8b8b8;
    border: 1px solid #a8a8a8;
}

.float-btns {
    position: absolute;
    left: 1283px;
    top: 291px;
    display: flex;
    flex-direction: column;
    gap: 11px;
}

.float-btn {
    width: 44px;
    height: 44px;
    text-align: center;
    background: #f60;
    color: #fff;
    font-family: "Noto Sans CJK SC", sans-serif;
    font-size: 15px;
    line-height: 19px;
    word-spacing: 2px;
}

.float-label {
    display: block;
    margin-top: -1px;
}

.float-top {
    display: flex;
    align-items: center;
    justify-content: center;
    background: #c0c0c0;
}

/* horizontal scroll */
.hscroll {
    display: flex;
    align-items: center;
    height: 15px;
    background: #f0f0f0;
    border-top: 1px solid #e4e4e4;
}

.arrow-left {
    margin-left: 6px;
}

.hthumb {
    width: 1296px;
    height: 13px;
    margin-left: 6px;
    background: #b9b9b9;
    border: 1px solid #a9a9a9;
}

.arrow-right {
    margin-left: 24px;
}

/* status bar */
.statusbar {
    position: relative;
    display: flex;
    align-items: center;
    height: 25px;
    padding-left: 15px;
    padding-top: 1px;
    background: linear-gradient(#efece0, #e9e5d2);
    border-top: 1px solid #cfcbb8;
    color: #555;
}

.status-item {
    display: flex;
    align-items: center;
    gap: 3px;
    white-space: nowrap;
}

.status-right {
    position: absolute;
    left: 882px;
    top: 1px;
    height: 24px;
    display: flex;
    align-items: center;
}

.status-cross {
    margin-left: 23px;
    gap: 5px;
    color: #28a850;
}

.status-med {
    margin-left: 17px;
}

.status-speed {
    margin-left: 13px;
    gap: 4px;
    color: #333;
}

.status-down {
    margin-left: 15px;
    color: #333;
}

.ime {
    position: absolute;
    left: 1181px;
    top: -2px;
    width: 185px;
    height: 26px;
    display: flex;
    align-items: center;
    gap: 8px;
    padding-left: 1px;
    background: #fff;
    border-left: 1px solid #dde6f0;
    border-top: 1px solid #dde6f0;
}

.ime-s {
    font-family: "Liberation Sans", sans-serif;
    font-size: 21px;
    font-weight: 900;
    text-anchor: middle;
    fill: #fff;
}

.ime-zh {
    font-family: "Noto Sans CJK SC", sans-serif;
    font-size: 15px;
    font-weight: 700;
    color: #1470c0;
    margin-left: -1px;
}

.ime-shirt {
    margin-left: -2px;
}

/* taskbar */
.taskbar {
    position: relative;
    display: flex;
    height: 40px;
    background: #00080c;
    color: #fff;
}

.start {
    width: 48px;
    display: flex;
    align-items: center;
    justify-content: center;
    background: #000;
}

.cortana {
    width: 344px;
    display: flex;
    align-items: center;
    padding-left: 9px;
    background: #343434;
}

.cortana-text {
    margin-left: 5px;
    flex: 1;
    font-size: 14px;
    color: #8f9aa8;
}

.mic {
    margin-right: 15px;
}

.tile {
    position: relative;
    width: 49px;
    display: flex;
    align-items: center;
    justify-content: center;
}

.tile-first {
    width: 52px;
}

.tile-second {
    width: 53px;
}

.tile-open::after {
    content: "";
    position: absolute;
    left: 4px;
    right: 5px;
    bottom: 0;
    height: 2px;
    background: #76b9ed;
}

.tile-active {
    background: #3a4246;
}

.tile-active::after {
    left: 0;
    right: 1px;
}

.tile-q {
    font-family: "Liberation Sans", sans-serif;
    font-size: 17px;
    font-weight: 700;
    text-anchor: middle;
    fill: #ff0;
}

.tray {
    position: absolute;
    left: 1016px;
    top: 0;
    right: 0;
    height: 40px;
    display: flex;
    align-items: center;
}

.tray::after {
    content: "";
    position: absolute;
    right: 4px;
    top: 0;
    width: 1px;
    height: 40px;
    background: #444;
}

.cpu, .clock {
    display: flex;
    flex-direction: column;
    align-items: center;
    line-height: 18px;
}

.cpu {
    width: 64px;
}

.tray-up { margin-left: 12px; }
.tray-bat { margin-left: 9px; }
.tray-wifi { margin-left: 11px; }
.tray-vol { margin-left: 9px; }

.tray-zh {
    margin-left: 9px;
    font-family: "Noto Sans CJK SC", sans-serif;
    font-size: 14px;
}

.tray-s {
    margin-left: 13px;
}

.tray-s-text {
    font-family: "Liberation Sans", sans-serif;
    font-size: 14px;
    font-weight: 900;
    text-anchor: middle;
    fill: #fff;
}

.clock {
    width: 72px;
    margin-left: 10px;
    font-size: 12.500px;
}

.notify {
    position: relative;
    margin-left: 12px;
}

.notify-count {
    position: absolute;
    left: 10px;
    top: 7px;
    width: 15px;
    height: 15px;
    border-radius: 50%;
    background: #333;
    border: 1px solid #666;
    font-size: 10px;
    font-weight: 700;
    line-height: 13px;
    text-align: center;
}
```
